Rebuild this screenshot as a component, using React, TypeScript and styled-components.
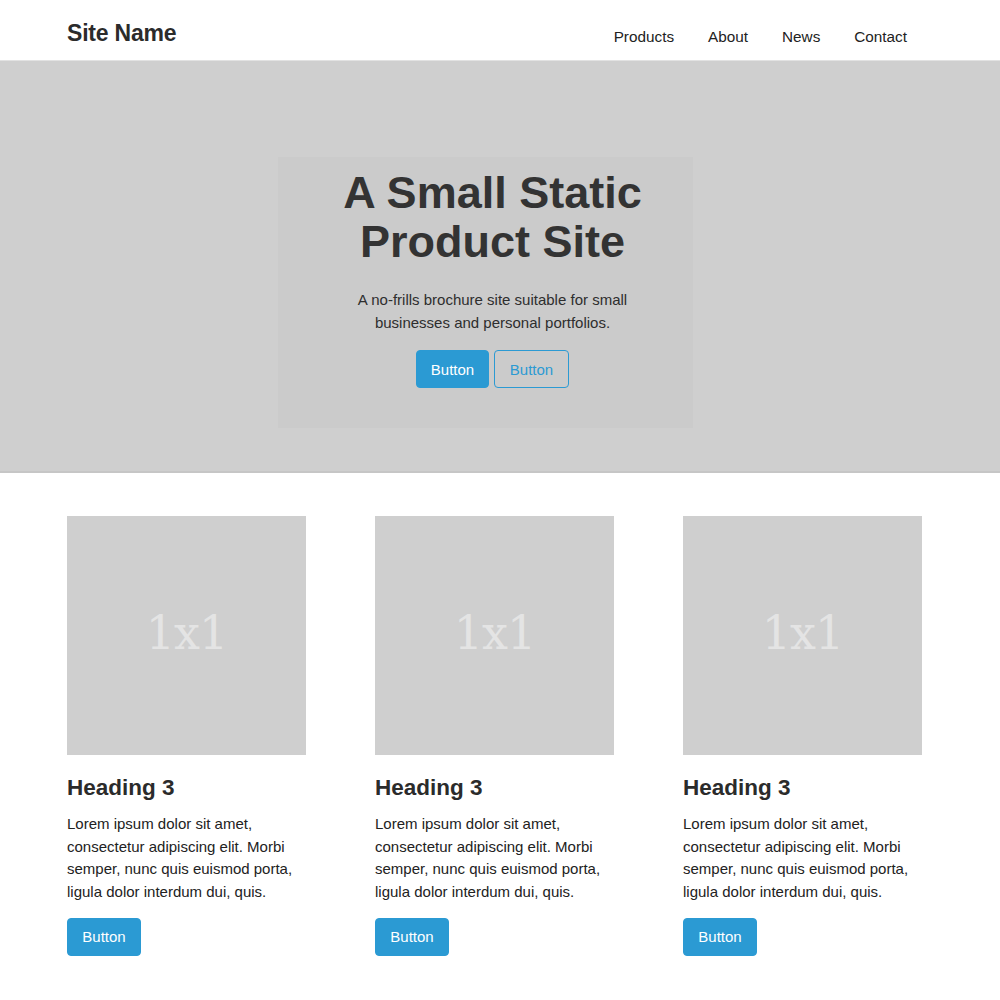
import React from "react";
import styled, { createGlobalStyle } from "styled-components";

const Global = createGlobalStyle`
  html, body { margin: 0; padding: 0; background: #fff; }
  body { font-family: "Liberation Sans", Arial, sans-serif; color: #333; }
  * { box-sizing: border-box; }
`;

const Header = styled.header`
  height: 61px;
  border-bottom: 1px solid #e2e2e2;
  display: flex;
  align-items: center;
  justify-content: space-between;
  padding: 0 93px 0 67px;
`;

const Brand = styled.div`
  font-size: 23px;
  font-weight: 700;
  color: #2b2b2b;
  letter-spacing: -0.2px;
  margin-top: 6px;
`;

const Nav = styled.nav`
  display: flex;
  gap: 34px;
  margin-top: 13px;
`;

const NavLink = styled.a`
  font-size: 15.3px;
  color: #222;
  text-decoration: none;
`;

const Hero = styled.section`
  background: #cfcfcf;
  border-bottom: 2px solid #c6c6c6;
  height: 412px;
  display: flex;
  justify-content: flex-start;
  padding: 96px 0 0 278px;
`;

const HeroBox = styled.div`
  width: 415px;
  height: 271px;
  background: #cbcbcb;
  display: flex;
  flex-direction: column;
  align-items: center;
  text-align: center;
  padding: 11px 0 0 14px;
`;

const Title = styled.h1`
  margin: 0;
  font-size: 45px;
  line-height: 49px;
  font-weight: 700;
  color: #333;
`;

const Lead = styled.p`
  margin: 22px 0 0;
  font-size: 15px;
  line-height: 23px;
  color: #2e2e2e;
`;

const ButtonRow = styled.div`
  display: flex;
  gap: 5px;
  margin-top: 16px;
`;

const Button = styled.button<{ $outline?: boolean; $w?: number }>`
  height: 38px;
  width: ${(p) => p.$w ?? 74}px;
  border-radius: 4px;
  font-family: "Liberation Sans", Arial, sans-serif;
  font-size: 15px;
  cursor: pointer;
  border: 1px solid #2b9ad3;
  background: ${(p) => (p.$outline ? "transparent" : "#2b9ad3")};
  color: ${(p) => (p.$outline ? "#2b9ad3" : "#fff")};
  padding: 0;
`;

const Cards = styled.section`
  display: grid;
  grid-template-columns: repeat(3, 239px);
  column-gap: 69px;
  padding: 43px 0 0 67px;
`;

const Card = styled.article`
  display: flex;
  flex-direction: column;
  align-items: flex-start;
`;

const Thumb = styled.div`
  width: 239px;
  height: 239px;
  background: #cfcfcf;
  display: flex;
  align-items: center;
  justify-content: center;
  font-family: "DejaVu Serif", "Liberation Serif", serif;
  font-size: 46px;
  color: #e4e4e4;
  letter-spacing: -1px;
  padding-bottom: 6px;
`;

const CardTitle = styled.h3`
  margin: 19px 0 0;
  font-size: 22.5px;
  line-height: 28px;
  font-weight: 700;
  color: #2b2b2b;
`;

const CardText = styled.p`
  margin: 11px 0 14px;
  font-size: 15px;
  line-height: 22.7px;
  color: #222;
`;

const cards = [0, 1, 2];

export default function App() {
  return (
    <>
      <Global />
      <Header>
        <Brand>Site Name</Brand>
        <Nav>
          <NavLink href="#">Products</NavLink>
          <NavLink href="#">About</NavLink>
          <NavLink href="#">News</NavLink>
          <NavLink href="#">Contact</NavLink>
        </Nav>
      </Header>
      <Hero>
        <HeroBox>
          <Title>
            A Small Static
            <br />
            Product Site
          </Title>
          <Lead>
            A no-frills brochure site suitable for small
            <br />
            businesses and personal portfolios.
          </Lead>
          <ButtonRow>
            <Button $w={73}>Button</Button>
            <Button $outline $w={75}>Button</Button>
          </ButtonRow>
        </HeroBox>
      </Hero>
      <Cards>
        {cards.map((i) => (
          <Card key={i}>
            <Thumb>1x1</Thumb>
            <CardTitle>Heading 3</CardTitle>
            <CardText>
              Lorem ipsum dolor sit amet, consectetur adipiscing elit. Morbi
              semper, nunc quis euismod porta, ligula dolor interdum dui, quis.
            </CardText>
            <Button>Button</Button>
          </Card>
        ))}
      </Cards>
    </>
  );
}
